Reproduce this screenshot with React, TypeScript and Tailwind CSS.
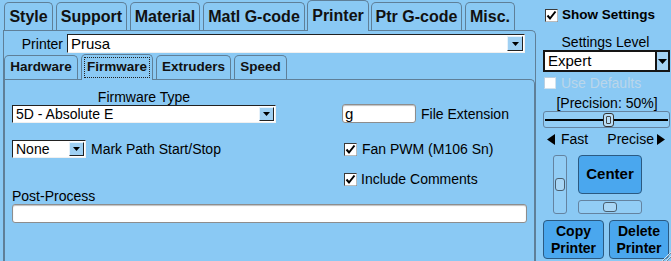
import React from "react";

const Tri = ({ w = 7, h = 4, dir = "down" }: { w?: number; h?: number; dir?: string }) => {
  if (dir === "down")
    return (
      <svg width={w} height={h} viewBox={`0 0 ${w} ${h}`}>
        <polygon points={`0,0 ${w},0 ${w / 2},${h}`} fill="#000" />
      </svg>
    );
  if (dir === "left")
    return (
      <svg width={w} height={h} viewBox={`0 0 ${w} ${h}`}>
        <polygon points={`${w},0 ${w},${h} 0,${h / 2}`} fill="#000" />
      </svg>
    );
  return (
    <svg width={w} height={h} viewBox={`0 0 ${w} ${h}`}>
      <polygon points={`0,0 0,${h} ${w},${h / 2}`} fill="#000" />
    </svg>
  );
};

const Check = ({ checked = true, disabled = false, size = 13 }: { checked?: boolean; disabled?: boolean; size?: number }) => (
  <svg width={size} height={size} viewBox="0 0 13 13" className="shrink-0">
    <rect x="0.5" y="0.5" width="12" height="12" fill="#fff" stroke={disabled ? "#b9cfe0" : "#3a3a3a"} />
    <line x1="0.5" y1="12.5" x2="12.5" y2="12.5" stroke={disabled ? "#d5e4ef" : "#bbb"} />
    <line x1="12.5" y1="0.5" x2="12.5" y2="12.5" stroke={disabled ? "#d5e4ef" : "#bbb"} />
    {checked && <polyline points="2.5,6.5 5,9.5 10.5,2.5" fill="none" stroke="#000" strokeWidth="2" />}
  </svg>
);

const TopTab = ({ label, w, sel = false }: { label: string; w: number; sel?: boolean }) => (
  <div
    style={{ width: w }}
    className={
      "flex items-center justify-center rounded-t-[5px] border border-b-0 border-[#5f7f98] text-[16px] font-bold text-[#111] " +
      (sel ? "relative z-10 -mb-[1px] h-[31px] bg-[#8ac9f4] pb-[1px]" : "h-[28px] bg-[#8ac9f4]")
    }
  >
    {label}
  </div>
);

const SubTab = ({ label, w, sel = false }: { label: string; w: number; sel?: boolean }) => (
  <div
    style={{ width: w }}
    className={
      "flex items-center justify-center rounded-t-[5px] border border-b-0 border-[#5f7f98] text-[13.5px] font-bold text-[#111] " +
      (sel ? "relative z-10 -mb-[1px] h-[26px] bg-[#8ac9f4] p-[2px]" : "h-[24px] bg-[#8ac9f4]")
    }
  >
    {sel ? (
      <div className="flex h-full w-full items-center justify-center border border-dotted border-[#222]">{label}</div>
    ) : (
      label
    )}
  </div>
);

const SmallSelect = ({ text, w }: { text: string; w: number }) => (
  <div
    style={{ width: w }}
    className="flex h-[18px] items-center border border-t-[#222] border-l-[#222] border-b-[#f0f0f0] border-r-[#f0f0f0] bg-white"
  >
    <span className="flex-1 pl-[3px] text-[14px] leading-[16px]">{text}</span>
    <div className="mr-[1px] flex h-[14px] w-[15px] items-center justify-center border border-t-[#e6f2fb] border-l-[#e6f2fb] border-r-[#222] border-b-[#222] bg-[#9fd0f3]">
      <Tri w={7} h={4} />
    </div>
  </div>
);

export default function App() {
  return (
    <div
      className="relative flex h-[261px] w-[671px] overflow-hidden bg-[#8ac9f4] text-black"
      style={{ fontFamily: '"Liberation Sans", Arial, sans-serif' }}
    >
      {/* Left column */}
      <div className="flex w-[536px] flex-col pl-[3px]">
        <div className="flex h-[30px] items-end pl-[1px]">
          <TopTab label="Style" w={49} />
          <div className="w-[3px]" />
          <TopTab label="Support" w={71} />
          <div className="w-[3px]" />
          <TopTab label="Material" w={70} />
          <div className="w-[3px]" />
          <TopTab label="Matl G-code" w={102} />
          <div className="w-[2px]" />
          <TopTab label="Printer" w={62} sel />
          <div className="w-[2px]" />
          <TopTab label="Ptr G-code" w={91} />
          <div className="w-[3px]" />
          <TopTab label="Misc." w={50} />
        </div>
        <div className="flex flex-1 flex-col rounded-tr-[5px] border border-b-0 border-[#5f7f98]">
          <div className="mt-[3px] flex h-[19px] items-center">
            <span className="w-[59px] text-right text-[14px] leading-[16px]">Printer</span>
            <div className="ml-[4px] mr-[10px] flex h-[19px] flex-1 items-center border border-t-[#222] border-l-[#222] border-b-[#f0f0f0] border-r-[#f0f0f0] bg-white">
              <span className="flex-1 pl-[3px] text-[15px] leading-[16px]">Prusa</span>
              <div className="mr-[1px] flex h-[15px] w-[16px] items-center justify-center border border-t-[#e6f2fb] border-l-[#e6f2fb] border-r-[#222] border-b-[#222] bg-[#9fd0f3]">
                <Tri w={7} h={4} />
              </div>
            </div>
          </div>
          <div className="flex h-[26px] items-end">
            <SubTab label="Hardware" w={74} />
            <div className="w-[3px]" />
            <SubTab label="Firmware" w={72} sel />
            <div className="w-[3px]" />
            <SubTab label="Extruders" w={75} />
            <div className="w-[3px]" />
            <SubTab label="Speed" w={53} />
          </div>
          <div className="flex flex-1 flex-col rounded-tr-[5px] border border-b-0 border-[#5f7f98] pl-[7px]">
            <div className="flex">
              <div className="flex w-[264px] flex-col pt-[9px]">
                <div className="text-center text-[14px] leading-[16px]">Firmware Type</div>
                <SmallSelect text="5D - Absolute E" w={264} />
                <div className="mt-[17px] flex items-center">
                  <SmallSelect text="None" w={74} />
                  <span className="ml-[5px] text-[14px] leading-[16px]">Mark Path Start/Stop</span>
                </div>
              </div>
              <div className="ml-[66px] flex flex-col pt-[24px]">
                <div className="flex items-center">
                  <div className="h-[19px] w-[74px] rounded-[3px] border border-[#8d8d8d] bg-white pl-[2px] text-[15px] leading-[17px] shadow-[inset_0_1px_1px_rgba(0,0,0,0.25)]">
                    g
                  </div>
                  <span className="ml-[5px] text-[14px] leading-[16px]">File Extension</span>
                </div>
                <div className="ml-[2px] mt-[18px] flex h-[16px] items-center">
                  <Check />
                  <span className="ml-[5px] text-[14px] leading-[16px]">Fan PWM (M106 Sn)</span>
                </div>
                <div className="ml-[2px] mt-[14px] flex h-[16px] items-center">
                  <Check />
                  <span className="ml-[4px] text-[14px] leading-[16px]">Include Comments</span>
                </div>
              </div>
            </div>
            <div className="mt-[1px] text-[14px] leading-[16px]">Post-Process</div>
            <div className="h-[19px] w-[515px] rounded-[3px] border border-[#8d8d8d] bg-white shadow-[inset_0_1px_1px_rgba(0,0,0,0.25)]" />
          </div>
        </div>
      </div>

      {/* Right column */}
      <div className="flex w-[135px] flex-col">
        <div className="mt-[7px] flex h-[16px] items-center pl-[9px]">
          <Check />
          <span className="ml-[4px] text-[13.5px] font-bold leading-[16px]">Show Settings</span>
        </div>
        <div className="mt-[11px] pl-[4px] text-center text-[14px] leading-[16px]">Settings Level</div>
        <div className="ml-[7px] flex h-[22px] w-[127px] items-center border-2 border-[#151515] bg-white">
          <span className="flex-1 pl-[3px] text-[15px] leading-[16px]">Expert</span>
          <div className="flex h-full w-[13px] items-center justify-center border-l-2 border-[#151515] bg-[#a5d3f4]">
            <Tri w={9} h={5} />
          </div>
        </div>
        <div className="mt-[3px] flex h-[16px] items-center pl-[8px]">
          <Check checked={false} disabled size={12} />
          <span className="ml-[5px] text-[14px] leading-[16px] text-[#bad6ea]">Use Defaults</span>
        </div>
        <div className="mt-[4px] pl-[7px] text-center text-[14px] leading-[16px]">[Precision: 50%]</div>
        <div className="ml-[7px] flex h-[17px] w-[127px] items-center rounded-[3px] border border-[#6483a0] bg-[#92cdf5] px-[1px]">
          <div className="flex h-[2px] w-[58px] bg-black" />
          <div className="h-[14px] w-[11px] rounded-[3px] border border-[#333] bg-[#b9def7] p-[2px]">
            <div className="h-full w-full rounded-[1px] border border-[#444]" />
          </div>
          <div className="flex h-[2px] flex-1 bg-black" />
        </div>
        <div className="ml-[11px] mt-[3px] flex h-[16px] w-[118px] items-center justify-between text-[14px] leading-[16px]">
          <div className="flex items-center">
            <Tri dir="left" w={8} h={11} />
            <span className="ml-[6px]">Fast</span>
          </div>
          <div className="flex items-center">
            <span className="mr-[3px]">Precise</span>
            <Tri dir="right" w={8} h={11} />
          </div>
        </div>
        <div className="ml-[17px] mt-[8px] flex">
          <div className="flex h-[59px] w-[14px] items-center justify-center rounded-[3px] border border-[#6483a0] bg-[#92cdf5]">
            <div className="h-[13px] w-[10px] rounded-[3px] border border-[#4a5f70] bg-[#a9d6f5]" />
          </div>
          <div className="ml-[11px] flex flex-col">
            <div className="flex h-[39px] w-[64px] items-center justify-center rounded-[4px] border border-[#2b5a82] bg-[#4aa7ee] text-[15px] font-bold">
              Center
            </div>
            <div className="mt-[6px] flex h-[14px] w-[64px] items-center justify-center rounded-[3px] border border-[#6483a0] bg-[#92cdf5]">
              <div className="h-[10px] w-[14px] rounded-[3px] border border-[#4a5f70] bg-[#a9d6f5]" />
            </div>
          </div>
        </div>
        <div className="ml-[7px] mt-[6px] flex">
          <div className="flex h-[39px] w-[61px] flex-col items-center justify-center rounded-[4px] border border-[#2b5a82] bg-[#4aa7ee] text-[14px] font-bold leading-[17px]">
            <span>Copy</span>
            <span>Printer</span>
          </div>
          <div className="ml-[5px] flex h-[39px] w-[60px] flex-col items-center justify-center rounded-[4px] border border-[#2b5a82] bg-[#4aa7ee] text-[14px] font-bold leading-[17px]">
            <span>Delete</span>
            <span>Printer</span>
          </div>
        </div>
      </div>

      {/* resize grip */}
      <svg className="absolute bottom-0 right-0" width="11" height="11" viewBox="0 0 11 11">
        <line x1="2" y1="11" x2="11" y2="2" stroke="#c8e4f7" strokeWidth="1" />
        <line x1="6" y1="11" x2="11" y2="6" stroke="#c8e4f7" strokeWidth="1" />
        <line x1="3" y1="11" x2="11" y2="3" stroke="#6d8aa0" strokeWidth="1" />
        <line x1="7" y1="11" x2="11" y2="7" stroke="#6d8aa0" strokeWidth="1" />
      </svg>
    </div>
  );
}
